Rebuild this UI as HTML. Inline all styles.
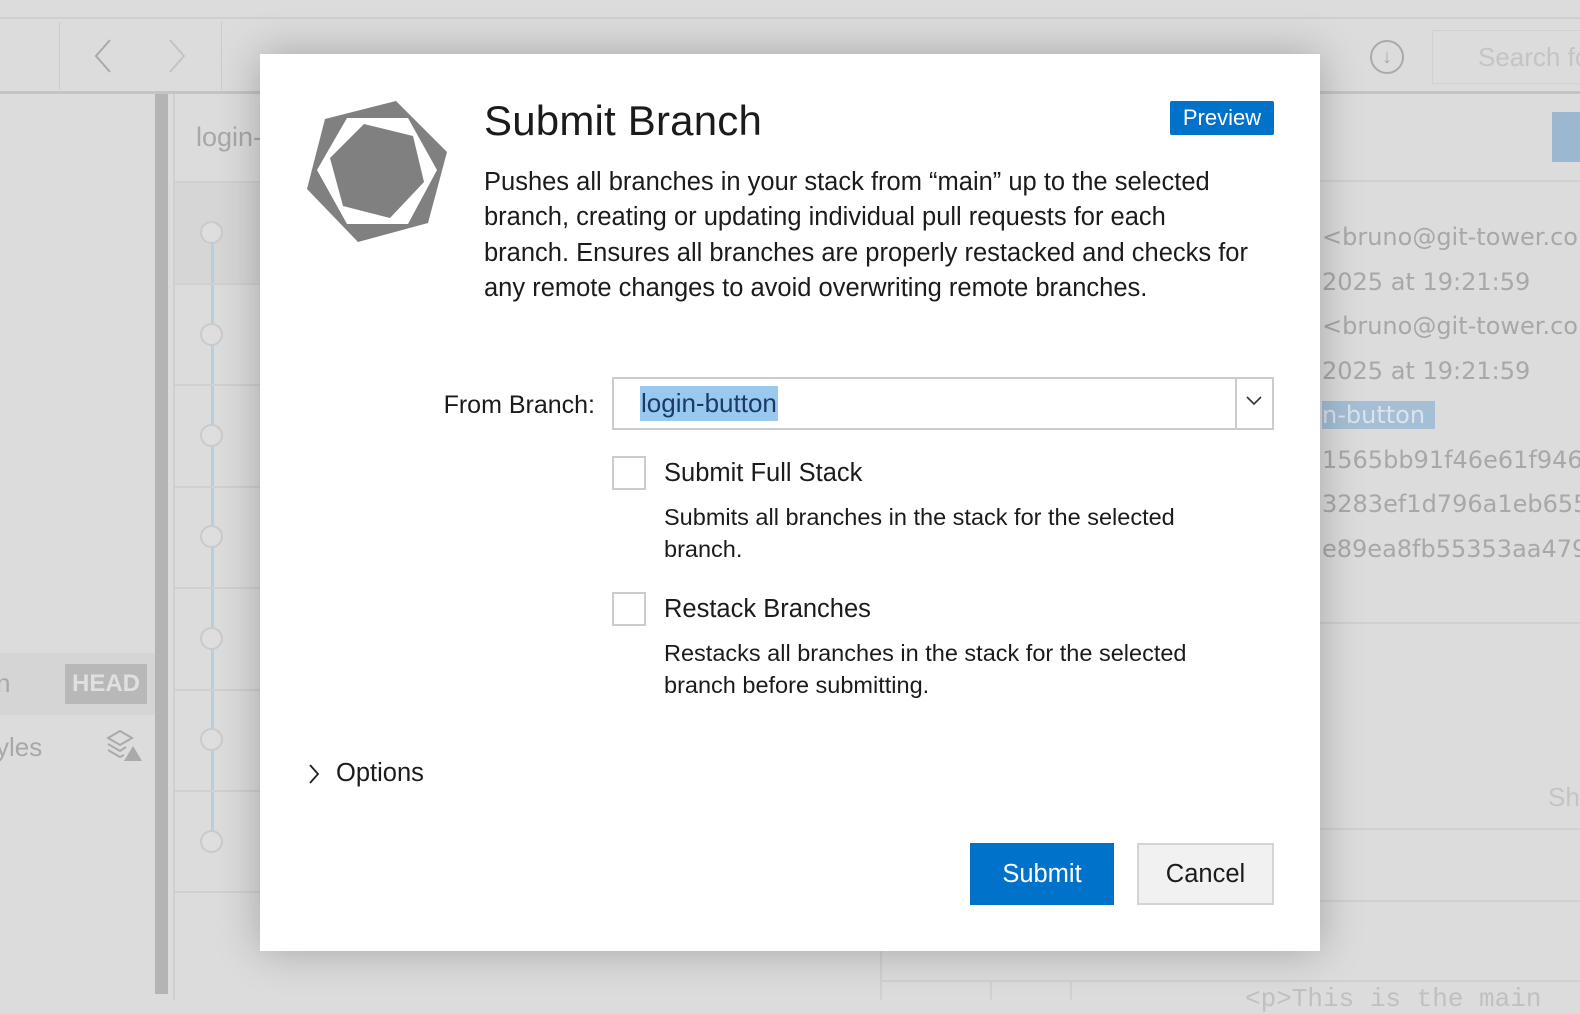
<!DOCTYPE html>
<html><head><meta charset="utf-8"><style>
*{margin:0;padding:0;box-sizing:border-box}
body{width:1580px;height:1000px;overflow:hidden;background:#dcdcdc;font-family:"Liberation Sans",sans-serif;position:relative}
.a{position:absolute;white-space:nowrap}
.g{color:#a8a8a8}
.dlg{left:260px;top:54px;width:1060px;height:897px;background:#fff;box-shadow:0 0 40px rgba(0,0,0,.25)}
.t{color:#1b1b1b}
</style></head><body>
<!-- background app -->
<div class="a" style="left:0;top:17px;width:1580px;height:2px;background:#cfcfcf"></div>
<div class="a" style="left:0;top:91px;width:1580px;height:3px;background:#c4c4c4"></div>
<div class="a" style="left:59px;top:22px;width:1px;height:68px;background:#ccc"></div>
<div class="a" style="left:221px;top:22px;width:1px;height:68px;background:#ccc"></div>
<svg class="a" style="left:90px;top:38px" width="100" height="40"><polyline points="20,2 6,18 20,34" fill="none" stroke="#aaa" stroke-width="2"/><polyline points="80,2 94,18 80,34" fill="none" stroke="#c4c4c4" stroke-width="2"/></svg>
<div class="a" style="left:1370px;top:40px;width:34px;height:34px;border:2px solid #aaa;border-radius:50%;color:#aaa;text-align:center;font-size:20px;line-height:30px">&#8595;</div>
<div class="a" style="left:1432px;top:30px;width:150px;height:54px;border:1px solid #d0d0d0"></div>
<div class="a" style="left:1478px;top:42px;font-size:26px;color:#c4c4c4">Search fo</div>
<div class="a" style="left:155px;top:94px;width:13px;height:900px;background:#b4b4b4"></div>
<div class="a" style="left:173px;top:94px;width:2px;height:906px;background:#d0d0d0"></div>
<div class="a g" style="left:196px;top:122px;font-size:27px">login-</div>
<div class="a" style="left:175px;top:181px;width:90px;height:2px;background:#d0d0d0"></div>
<div class="a" style="left:175px;top:183px;width:90px;height:100px;background:#d6d6d6"></div>
<div class="a" style="left:211px;top:232px;width:3px;height:610px;background:#b3cfe0"></div>
<div class="a" style="left:175px;top:283px;width:90px;height:2px;background:#d0d0d0"></div>
<div class="a" style="left:175px;top:384px;width:90px;height:2px;background:#d0d0d0"></div>
<div class="a" style="left:175px;top:486px;width:90px;height:2px;background:#d0d0d0"></div>
<div class="a" style="left:175px;top:587px;width:90px;height:2px;background:#d0d0d0"></div>
<div class="a" style="left:175px;top:689px;width:90px;height:2px;background:#d0d0d0"></div>
<div class="a" style="left:175px;top:790px;width:90px;height:2px;background:#d0d0d0"></div>
<div class="a" style="left:175px;top:891px;width:90px;height:2px;background:#d0d0d0"></div>
<div class="a" style="left:200px;top:221px;width:23px;height:23px;border:2px solid #cacaca;border-radius:50%;background:#dedede"></div>
<div class="a" style="left:200px;top:323px;width:23px;height:23px;border:2px solid #cacaca;border-radius:50%;background:#dedede"></div>
<div class="a" style="left:200px;top:424px;width:23px;height:23px;border:2px solid #cacaca;border-radius:50%;background:#dedede"></div>
<div class="a" style="left:200px;top:525px;width:23px;height:23px;border:2px solid #cacaca;border-radius:50%;background:#dedede"></div>
<div class="a" style="left:200px;top:627px;width:23px;height:23px;border:2px solid #cacaca;border-radius:50%;background:#dedede"></div>
<div class="a" style="left:200px;top:728px;width:23px;height:23px;border:2px solid #cacaca;border-radius:50%;background:#dedede"></div>
<div class="a" style="left:200px;top:830px;width:23px;height:23px;border:2px solid #cacaca;border-radius:50%;background:#dedede"></div>
<div class="a" style="left:0;top:653px;width:155px;height:62px;background:#d5d5d5"></div>
<div class="a" style="left:65px;top:664px;width:82px;height:40px;background:#b8b8b8;color:#e0e0e0;font-size:24px;font-weight:bold;text-align:center;line-height:40px">HEAD</div>
<div class="a g" style="left:-4px;top:668px;font-size:26px">n</div>
<div class="a g" style="left:-4px;top:732px;font-size:26px">yles</div>
<svg class="a" style="left:106px;top:728px" width="38" height="34"><path d="M2,10 L14,3 L26,10 L14,17 Z M2,16 L14,23 L20,19 M2,22 L14,29 L18,27" fill="none" stroke="#aaa" stroke-width="2"/><polygon points="27,18 36,33 18,33" fill="#aaa"/></svg>
<div class="a" style="left:1552px;top:112px;width:30px;height:50px;background:#9bb8d0"></div>
<div class="a" style="left:1320px;top:180px;width:260px;height:2px;background:#d0d0d0"></div>
<div class="a g" style="left:1322px;top:215px;line-height:44.5px;font-family:'DejaVu Sans',sans-serif;font-size:24px">&lt;bruno@git-tower.com<br>2025 at 19:21:59<br>&lt;bruno@git-tower.com<br>2025 at 19:21:59<br><span style="background:#a5bfd6;color:#dbe4ec;padding:0 10px 0 0">n-button</span><br>1565bb91f46e61f9469<br>3283ef1d796a1eb655e<br>e89ea8fb55353aa4790</div>
<div class="a" style="left:1320px;top:622px;width:260px;height:2px;background:#d0d0d0"></div>
<div class="a" style="left:1548px;top:782px;font-size:26px;color:#c4c4c4">Sh</div>
<div class="a" style="left:1320px;top:828px;width:260px;height:2px;background:#d0d0d0"></div>
<div class="a" style="left:880px;top:900px;width:700px;height:2px;background:#d0d0d0"></div>
<div class="a" style="left:880px;top:980px;width:700px;height:2px;background:#d0d0d0"></div>
<div class="a" style="left:880px;top:900px;width:2px;height:100px;background:#d0d0d0"></div>
<div class="a" style="left:990px;top:982px;width:2px;height:18px;background:#d0d0d0"></div>
<div class="a" style="left:1070px;top:982px;width:2px;height:18px;background:#d0d0d0"></div>
<div class="a" style="left:1245px;top:984px;font-family:'Liberation Mono',monospace;font-size:26px;color:#c0c0c0">&lt;p&gt;This is the main</div>

<!-- dialog -->
<div class="a dlg"></div>
<svg class="a" style="left:300px;top:95px" width="160" height="160" viewBox="300 95 160 160">
<polygon points="396,101 447,152 428,223 358,242 307,189 325,119" fill="#808080"/>
<polygon points="347,118 408,118 437,170 408,224 347,224 317,170" fill="#fff"/>
<polygon points="364,124 413,136 424,182 390,218 343,206 330,158" fill="#808080"/>
</svg>
<div class="a t" style="left:484px;top:97px;font-size:42px;letter-spacing:.2px">Submit Branch</div>
<div class="a" style="left:1170px;top:101px;width:104px;height:34px;background:#0072c9;color:#fff;font-size:22px;text-align:center;line-height:34px;border-radius:2px">Preview</div>
<div class="a t" style="left:484px;top:165px;font-size:25.5px;line-height:35.3px">Pushes all branches in your stack from “main” up to the selected<br>branch, creating or updating individual pull requests for each<br>branch. Ensures all branches are properly restacked and checks for<br>any remote changes to avoid overwriting remote branches.</div>
<div class="a t" style="left:380px;top:390px;width:215px;text-align:right;font-size:25px;line-height:30px">From Branch:</div>
<div class="a" style="left:612px;top:377px;width:662px;height:53px;border:2px solid #ccc"></div>
<div class="a" style="left:1235px;top:377px;width:2px;height:53px;background:#ccc"></div>
<svg class="a" style="left:1245px;top:394px" width="18" height="14"><polyline points="2,3 9,10 16,3" fill="none" stroke="#333" stroke-width="1.6"/></svg>
<div class="a" style="left:640px;top:386px;height:35px;padding:0 1px;background:#99c9ef;color:#1b3a6a;font-size:26px;line-height:35px">login-button</div>
<div class="a" style="left:612px;top:456px;width:34px;height:34px;border:2px solid #ccc"></div>
<div class="a t" style="left:664px;top:456px;font-size:25.5px;line-height:34px">Submit Full Stack</div>
<div class="a t" style="left:664px;top:501px;font-size:23.5px;line-height:32px">Submits all branches in the stack for the selected<br>branch.</div>
<div class="a" style="left:612px;top:592px;width:34px;height:34px;border:2px solid #ccc"></div>
<div class="a t" style="left:664px;top:592px;font-size:25.5px;line-height:34px">Restack Branches</div>
<div class="a t" style="left:664px;top:637px;font-size:23.5px;line-height:32px">Restacks all branches in the stack for the selected<br>branch before submitting.</div>
<svg class="a" style="left:307px;top:763px" width="14" height="22"><polyline points="3,2 11,11 3,20" fill="none" stroke="#222" stroke-width="1.8"/></svg>
<div class="a t" style="left:336px;top:756px;font-size:25.5px;line-height:34px">Options</div>
<div class="a" style="left:970px;top:843px;width:144px;height:62px;background:#0072c9;color:#fff;font-size:25.5px;text-align:center;line-height:62px">Submit</div>
<div class="a t" style="left:1137px;top:843px;width:137px;height:62px;background:#f1f1f1;border:2px solid #d4d4d4;font-size:25.5px;text-align:center;line-height:58px">Cancel</div>
</body></html>
